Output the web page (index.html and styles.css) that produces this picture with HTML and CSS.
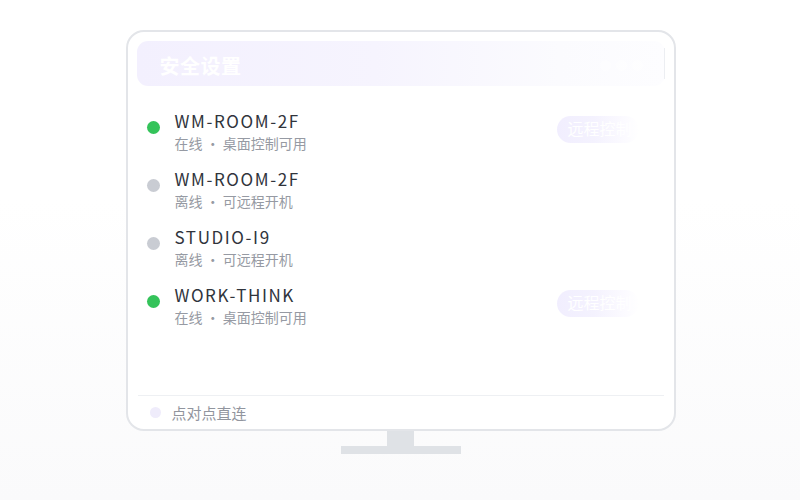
FILE: index.html
```html
<!DOCTYPE html>
<html lang="zh-CN">
<head>
<meta charset="utf-8">
<title>设备列表</title>
<link rel="stylesheet" href="styles.css">
</head>
<body>
<div class="stage">
  <div class="monitor">
    <div class="screen">
      <div class="header">
        <span class="header-title">安全设置</span>
        <span class="header-tools"><i></i><i></i><i></i></span>
      </div>
      <ul class="devices">
        <li class="device">
          <span class="status online"></span>
          <div class="info">
            <div class="name">WM-ROOM-2F</div>
            <div class="meta">在线 · 桌面控制可用</div>
          </div>
          <span class="action">远程控制</span>
        </li>
        <li class="device">
          <span class="status"></span>
          <div class="info">
            <div class="name">WM-ROOM-2F</div>
            <div class="meta">离线 · 可远程开机</div>
          </div>
        </li>
        <li class="device">
          <span class="status"></span>
          <div class="info">
            <div class="name">STUDIO-I9</div>
            <div class="meta">离线 · 可远程开机</div>
          </div>
        </li>
        <li class="device">
          <span class="status online"></span>
          <div class="info">
            <div class="name">WORK-THINK</div>
            <div class="meta">在线 · 桌面控制可用</div>
          </div>
          <span class="action">远程控制</span>
        </li>
      </ul>
      <div class="footer">
        <span class="footer-dot"></span>
        <span class="footer-text">点对点直连</span>
      </div>
    </div>
  </div>
  <div class="neck"></div>
  <div class="base"></div>
</div>
</body>
</html>
```
FILE: styles.css
```css
* { box-sizing: border-box; }

html, body {
  margin: 0;
  height: 100%;
}

body {
  background: linear-gradient(180deg, #ffffff 0%, #ffffff 40%, #fafafb 100%);
  font-family: "Noto Sans CJK SC", "Noto Sans", sans-serif;
}

.stage {
  display: flex;
  flex-direction: column;
  align-items: center;
  padding-top: 30px;
  padding-left: 1px;
}

.monitor {
  width: 550px;
  height: 401px;
  border: 2px solid #e3e5e9;
  border-radius: 18px;
  background: #ffffff;
  overflow: hidden;
}

.screen {
  height: 100%;
  display: flex;
  flex-direction: column;
  padding: 9px 9px 0 9px;
}

.header {
  position: relative;
  height: 45px;
  flex: none;
  border-radius: 11px;
  background: linear-gradient(90deg, #f3f0fe 0%, #f6f4fe 45%, #fbfbfe 80%, #fdfdff 100%);
  display: flex;
  align-items: center;
  padding: 3px 0 0 23px;
}

.header::after {
  content: "";
  position: absolute;
  right: 0;
  top: 7px;
  bottom: 7px;
  width: 1px;
  background: #eceef2;
}

.header-title {
  color: #ffffff;
  font-size: 20px;
  font-weight: 700;
  letter-spacing: 0.5px;
}

.header-tools {
  margin-left: auto;
  margin-right: 22px;
  display: flex;
  gap: 5px;
}

.header-tools i {
  width: 11px;
  height: 11px;
  border-radius: 50%;
  background: #ffffff;
  opacity: 0.45;
}

.devices {
  list-style: none;
  margin: 0;
  padding: 24px 0 0 0;
  flex: 1;
}

.device {
  height: 58px;
  display: flex;
  align-items: flex-start;
}

.status {
  flex: none;
  width: 13px;
  height: 13px;
  border-radius: 50%;
  background: #c9ccd3;
  margin: 11px 15px 0 10px;
}

.status.online {
  background: #34c35a;
}

.info {
  display: flex;
  flex-direction: column;
}

.name {
  font-size: 17px;
  line-height: 22px;
  color: #30343c;
  letter-spacing: 1.6px;
}

.meta {
  font-size: 14px;
  line-height: 22px;
  color: #969aa3;
}

.action {
  margin-left: auto;
  margin-right: 26px;
  margin-top: 6px;
  width: 82px;
  height: 27px;
  border-radius: 14px;
  padding-left: 11px;
  overflow: hidden;
  white-space: nowrap;
  font-family: "Liberation Serif", "Noto Sans CJK SC", serif;
  font-size: 16px;
  line-height: 27px;
  color: #ffffff;
  background: linear-gradient(90deg, #f1eefe 0%, #f4f2fe 45%, #fbfaff 80%, #ffffff 100%);
}

.footer {
  flex: none;
  height: 34px;
  border-top: 1px solid #eef0f3;
  margin: 0 1px;
  display: flex;
  align-items: center;
  padding-left: 12px;
}

.footer-dot {
  width: 11px;
  height: 11px;
  border-radius: 50%;
  background: #efecfb;
  margin-right: 11px;
}

.footer-text {
  font-size: 15px;
  color: #91959e;
}

.neck {
  width: 27px;
  height: 15px;
  background: #dfe2e6;
}

.base {
  width: 120px;
  height: 8px;
  background: #dfe2e6;
}
```
